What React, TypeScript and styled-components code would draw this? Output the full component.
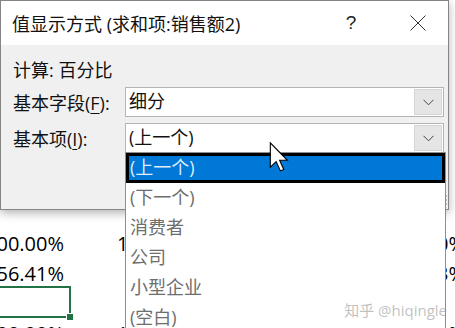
import React from 'react';
import styled, { createGlobalStyle } from 'styled-components';

const GlobalStyle = createGlobalStyle`
  html, body {
    margin: 0;
    padding: 0;
    background: #fff;
    overflow: hidden;
  }
  body {
    font-family: "Open Sans", "Noto Sans CJK SC", sans-serif;
  }
`;

const Screen = styled.div`
  position: relative;
  width: 455px;
  height: 328px;
  overflow: hidden;
  background: #fff;
`;

/* spreadsheet behind the dialog */
const Sheet = styled.div`
  display: grid;
  grid-template-columns: 70px 132px 109px 160px;
  grid-auto-rows: 30px;
  margin-top: -13px;
  font-size: 20px;
  color: #000;
`;

const Cell = styled.div<{ $selected?: boolean }>`
  position: relative;
  display: flex;
  align-items: flex-end;
  justify-content: flex-end;
  padding: 0 6px 1px 0;
  white-space: nowrap;
  line-height: 24px;

  ${p =>
    p.$selected &&
    `
    &::after {
      content: '';
      position: absolute;
      left: -2px;
      top: -1px;
      right: -1px;
      bottom: -1px;
      border: 2px solid #217346;
    }
    &::before {
      content: '';
      position: absolute;
      right: -4px;
      bottom: -4px;
      width: 6px;
      height: 6px;
      background: #217346;
      border: 1px solid #fff;
      z-index: 1;
    }
  `}
`;

/* dialog window */
const Dialog = styled.section`
  position: absolute;
  left: 0;
  top: 0;
  width: 449px;
  height: 210px;
  box-sizing: border-box;
  border: 1px solid #858585;
  background: #f0f0f0;
  box-shadow: 0 3px 9px rgba(0, 0, 0, 0.3);
  display: flex;
  flex-direction: column;
  z-index: 2;
`;

const TitleBar = styled.header`
  height: 44px;
  flex-shrink: 0;
  background: #fff;
  display: flex;
  align-items: center;
  padding: 0 7px 0 11px;
  gap: 21px;
`;

const Title = styled.h1`
  flex: 1;
  margin: 0;
  font-size: 18px;
  font-weight: 400;
  color: #111;
  white-space: nowrap;
`;

const TitleButton = styled.div`
  width: 46px;
  height: 44px;
  display: flex;
  align-items: center;
  justify-content: center;
  font-family: "Liberation Sans", sans-serif;
  font-size: 19px;
  color: #222;
`;

const Body = styled.div`
  flex: 1;
  display: flex;
  flex-direction: column;
  padding: 12px 4px 0 12px;
  font-size: 18px;
  color: #111;
`;

const CalcLine = styled.div`
  height: 26px;
  line-height: 26px;
  margin-bottom: 4px;
  white-space: nowrap;
`;

const FieldRow = styled.div`
  display: grid;
  grid-template-columns: 112px 1fr;
  align-items: center;
  margin-bottom: 6px;
`;

const Label = styled.label`
  white-space: nowrap;
  u {
    text-decoration-thickness: 1px;
    text-underline-offset: 3px;
  }
`;

const Combo = styled.div`
  position: relative;
  height: 30px;
  box-sizing: border-box;
  border: 1px solid #b4b4b4;
  background: #fff;
  display: flex;
`;

const ComboValue = styled.span`
  flex: 1;
  padding-left: 3px;
  line-height: 27px;
  color: #111;
`;

const ComboButton = styled.span`
  width: 26px;
  margin: 1px;
  background: #e5e5e5;
  border: 1px solid #d6d6d6;
  display: flex;
  align-items: center;
  justify-content: center;
`;

const DropList = styled.ul`
  position: absolute;
  left: -1px;
  top: 28px;
  width: 321px;
  margin: 0;
  padding: 0;
  list-style: none;
  box-sizing: border-box;
  border: 1px solid #8e8e8e;
  background: #fff;
  z-index: 3;
`;

const DropItem = styled.li<{ $active?: boolean }>`
  height: 30px;
  line-height: 29px;
  padding-left: 4px;
  font-size: 18px;
  color: ${p => (p.$active ? '#dcedfc' : '#6e6e6e')};
  background: ${p => (p.$active ? '#0078d7' : 'transparent')};
  box-shadow: ${p => (p.$active ? 'inset 0 0 0 3px #000' : 'none')};
  white-space: nowrap;
`;

const Grip = styled.svg`
  position: absolute;
  right: 0;
  bottom: 3px;
`;

const Cursor = styled.svg`
  position: absolute;
  left: 269px;
  top: 142px;
  z-index: 5;
`;

const Watermark = styled.div`
  position: absolute;
  right: 8px;
  bottom: 8px;
  font-size: 15px;
  color: rgba(150, 150, 150, 0.6);
  white-space: nowrap;
  z-index: 6;
`;

const Chevron = () => (
  <svg width="11" height="7" viewBox="0 0 11 7">
    <polyline points="0.5,0.8 5.5,5.8 10.5,0.8" fill="none" stroke="#454545" strokeWidth="1" />
  </svg>
);

const emptyRow = ['', '', '', ''];
const sheetRows: string[][] = [
  ...Array.from({ length: 8 }, () => emptyRow),
  ['100.00%', '100.00%', '', '100.00%'],
  ['56.41%', '', '', '72.23%'],
  ['', '', '', ''],
  ['100.00%', '100.00%', '', '100.00%'],
];

const items = ['(上一个)', '(下一个)', '消费者', '公司', '小型企业', '(空白)'];

export default function App() {
  return (
    <>
      <GlobalStyle />
      <Screen>
        <Sheet>
          {sheetRows.map((row, r) =>
            row.map((v, c) => (
              <Cell key={`${r}-${c}`} $selected={r === 10 && c === 0}>
                {v}
              </Cell>
            ))
          )}
        </Sheet>

        <Dialog>
          <TitleBar>
            <Title>值显示方式 (求和项:销售额2)</Title>
            <TitleButton>?</TitleButton>
            <TitleButton>
              <svg width="16" height="16" viewBox="0 0 16 16">
                <path d="M0.5 0.5 L15.5 15.5 M15.5 0.5 L0.5 15.5" stroke="#333" strokeWidth="1" />
              </svg>
            </TitleButton>
          </TitleBar>

          <Body>
            <CalcLine>计算: 百分比</CalcLine>
            <FieldRow>
              <Label>
                基本字段(<u>F</u>):
              </Label>
              <Combo>
                <ComboValue>细分</ComboValue>
                <ComboButton>
                  <Chevron />
                </ComboButton>
              </Combo>
            </FieldRow>
            <FieldRow>
              <Label>
                基本项(<u>I</u>):
              </Label>
              <Combo>
                <ComboValue>(上一个)</ComboValue>
                <ComboButton>
                  <Chevron />
                </ComboButton>
                <DropList>
                  {items.map((it, i) => (
                    <DropItem key={it} $active={i === 0}>
                      {it}
                    </DropItem>
                  ))}
                </DropList>
              </Combo>
            </FieldRow>
          </Body>

          <Grip width="9" height="11" viewBox="0 0 9 11">
            {[
              [6, 0],
              [6, 4],
              [2, 4],
              [6, 8],
              [2, 8],
            ].map(([x, y]) => (
              <rect key={`${x}-${y}`} x={x} y={y} width="2" height="2" fill="#b8b8b8" />
            ))}
          </Grip>
        </Dialog>

        <Cursor width="20" height="30" viewBox="0 0 12 19">
          <path
            d="M0.5 0.5 L0.5 16 L4.2 12.4 L6.9 18.3 L9 17.4 L6.4 11.6 L11.3 11.6 Z"
            fill="#fff"
            stroke="#000"
            strokeWidth="0.7"
            strokeLinejoin="miter"
          />
        </Cursor>

        <Watermark>知乎 @hiqingle</Watermark>
      </Screen>
    </>
  );
}
